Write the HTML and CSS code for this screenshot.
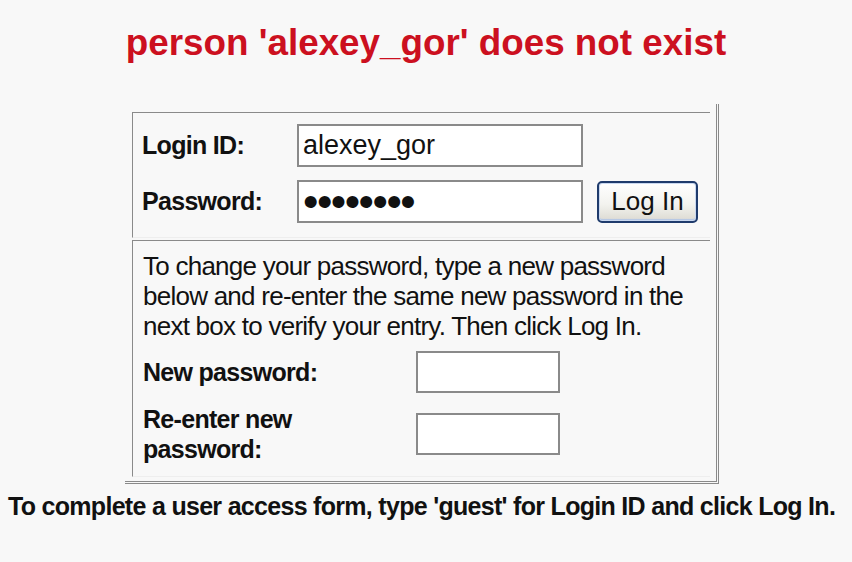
FILE: index.html
```html
<!DOCTYPE html>
<html lang="en">
  <head>
  <meta charset="UTF-8">
  <link rel="stylesheet" href="styles.css">
  </head>
  <body>
    <h1 class="error">person 'alexey_gor' does not exist</h1>
    <form class="login" accept-charset="UTF-8">
      <div class="panel">
        <div class="cell creds">
          <label for="uid">Login ID:</label>
          <input type="text" id="uid" value="alexey_gor">
          <span></span>
          <label for="pwd">Password:</label>
          <input type="password" id="pwd" value="xxxxxxxx">
          <button type="button" class="btn">Log In</button>
        </div>
        <div class="cell change">
          <p>To change your password, type a new password below and re-enter the same new password in the next box to verify your entry. Then click Log In.</p>
          <div class="fields">
            <label for="npw">New password:</label>
            <input type="password" id="npw" class="short">
            <label for="rpw">Re-enter new<br>password:</label>
            <input type="password" id="rpw" class="short">
          </div>
        </div>
      </div>
    </form>
    <p class="note">To complete a user access form, type 'guest' for Login ID and click Log In.</p>
  </body>
</html>
```

FILE: styles.css
```css
html, body { padding: 0; margin: 0; }
body { background: #f8f8f8; color: #111; font: 25px/1.15 "Liberation Sans", Arial, sans-serif; }
input, button, p { font: inherit; }
h1.error {
  margin: 0; padding-top: 23px; text-align: center;
  font: bold 36.8px/40px "Liberation Sans", Arial, sans-serif; color: #cc1020;
}
.login { margin: 41px 0 0 125px; width: 594px; }
.panel {
  padding: 8px 6px 4px 7px;
  border-right: 3px double #8a8a8a; border-bottom: 3px double #8a8a8a;
}
.cell { border-top: 1px solid #8a8a8a; border-left: 1px solid #8a8a8a; border-bottom: 1px solid #eee; }
.cell label { font-weight: bold; letter-spacing: -0.7px; }
.creds {
  display: grid; grid-template-columns: 155px 300px 101px;
  grid-template-rows: 43px 43px; row-gap: 13px; align-items: center;
  padding: 11px 0 14px 9px; margin-bottom: 2px;
}
input[type=text], input[type=password] {
  box-sizing: border-box; width: 286px; height: 43px; margin: 0;
  padding: 0 4px; border: 2px solid #8a8a8a; background: #fff;
  font: 27px "Liberation Sans", Arial, sans-serif; color: #111;
}
#pwd { font-size: 44px; letter-spacing: -1.5px; }
input.short { width: 144px; height: 42px; }
.btn {
  box-sizing: border-box; width: 101px; height: 42px; padding: 0;
  border: 2px solid #1f3b6c; border-radius: 5px; color: #111;
  background: linear-gradient(#ffffff, #f3f3ef 55%, #dcdad2);
  box-shadow: inset 0 0 0 1px #c9d8f0, inset 0 -2px 1px #b3c6e6;
  font: 26px "Liberation Sans", Arial, sans-serif; cursor: pointer;
}
.change { padding: 10px 0 12px 10px; }
.change p { margin: 0 12px 10px 0; font-size: 26px; line-height: 30px; letter-spacing: -0.75px; }
.fields {
  display: grid; grid-template-columns: 273px 144px;
  grid-template-rows: 42px 60px; row-gap: 11px; align-items: center;
  line-height: 30px;
}
.note { margin: 6px 0 0 8px; font-weight: bold; line-height: 32px; letter-spacing: -0.7px; white-space: nowrap; }
```
